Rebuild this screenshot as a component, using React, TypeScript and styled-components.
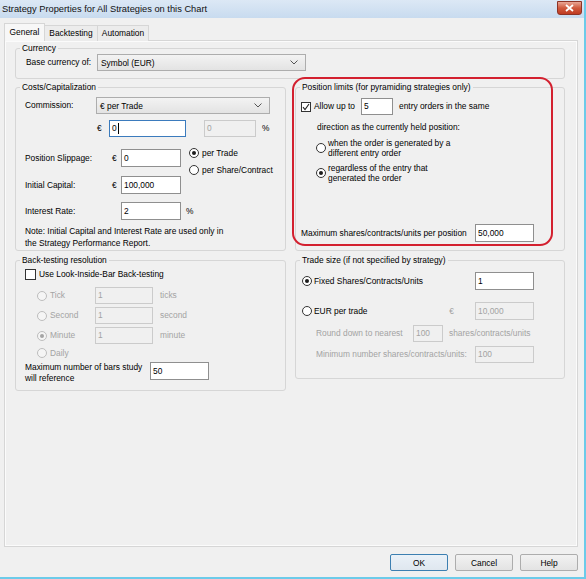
import React from "react";
import styled, { createGlobalStyle } from "styled-components";

const GlobalStyle = createGlobalStyle`
  html, body {
    margin: 0;
    padding: 0;
    background: #f0f0f0;
  }
  body {
    font-family: "Liberation Sans", Arial, sans-serif;
    font-size: 8.4px;
    color: #000;
  }
  * {
    box-sizing: border-box;
  }
`;

const Window = styled.div`
  width: 586px;
  height: 579px;
  display: flex;
  flex-direction: column;
  background: #f0f0f0;
  border-right: 2px solid #6ccbe9;
  border-bottom: 2px solid #6ccbe9;
  overflow: hidden;
`;

const TitleBar = styled.div`
  display: flex;
  justify-content: space-between;
  height: 18px;
  padding-left: 2px;
  background: linear-gradient(#dce8f5, #c8dbef);
`;

const Title = styled.span`
  font-size: 9.3px;
  line-height: 18px;
  color: #111;
`;

const CloseButton = styled.div`
  display: flex;
  align-items: center;
  justify-content: center;
  width: 25px;
  height: 14px;
  margin: 1px 2px 0 0;
  border: 1px solid #8d3326;
  border-radius: 0 0 3px 3px;
  background: linear-gradient(#e9a796, #d05a3e 50%, #bf3b22);
`;

const TabStrip = styled.div`
  display: flex;
  align-items: flex-end;
  height: 18px;
  margin-top: 5px;
  padding-left: 4px;
`;

const Tab = styled.div<{ $active?: boolean; $w: number }>`
  position: relative;
  z-index: ${(p) => (p.$active ? 1 : 0)};
  width: ${(p) => p.$w}px;
  height: ${(p) => (p.$active ? 18 : 16)}px;
  line-height: ${(p) => (p.$active ? 17 : 15)}px;
  text-align: center;
  border: 1px solid #d6d6d6;
  border-bottom: none;
  border-left: ${(p) => (p.$active ? "1px solid #d6d6d6" : "none")};
  background: ${(p) => (p.$active ? "#f7f7f7" : "#ececec")};
`;

const Panel = styled.div`
  width: 574px;
  height: 507px;
  margin: -1px 0 0 4px;
  padding: 2px 0 0 10px;
  border: 1px solid #d6d6d6;
  background: #f0f0f0;
  box-shadow: inset 1px 1px 0 #fbfbfb, inset -1px -1px 0 #fbfbfb;
`;

const Group = styled.fieldset<{ $w?: number; $h: number }>`
  display: block;
  width: ${(p) => (p.$w ? `${p.$w}px` : "auto")};
  height: ${(p) => p.$h}px;
  min-width: 0;
  margin: 0;
  padding: 0;
  border: 1px solid #d6d6d6;
  border-radius: 3px;
`;

const Legend = styled.legend`
  margin-left: 4px;
  padding: 0 2px;
  line-height: 10px;
`;

const GroupBody = styled.div<{ $pl: number }>`
  padding-left: ${(p) => p.$pl}px;
`;

const Columns = styled.div`
  display: grid;
  grid-template-columns: 271px 270px;
  column-gap: 9px;
  align-items: start;
  margin-top: 3px;
`;

const Column = styled.div`
  display: flex;
  flex-direction: column;
  gap: 4px;
`;

const Highlight = styled.div`
  position: relative;
`;

const RedOutline = styled.div`
  position: absolute;
  left: -3px;
  top: -5px;
  width: 261px;
  height: 169px;
  border: 2px solid #d3202f;
  border-radius: 13px;
  pointer-events: none;
`;

const Row = styled.div<{ $mt?: number; $h?: number; $ml?: number; $pr?: number; $top?: boolean }>`
  display: flex;
  align-items: ${(p) => (p.$top ? "flex-start" : "center")};
  height: ${(p) => (p.$h ? `${p.$h}px` : "auto")};
  margin-top: ${(p) => p.$mt ?? 0}px;
  margin-left: ${(p) => p.$ml ?? 0}px;
  padding-right: ${(p) => p.$pr ?? 0}px;
`;

const Label = styled.span<{ $w?: number; $ml?: number; $mt?: number; $off?: boolean; $auto?: boolean }>`
  flex-shrink: 0;
  width: ${(p) => (p.$w ? `${p.$w}px` : "auto")};
  margin-left: ${(p) => (p.$auto ? "auto" : `${p.$ml ?? 0}px`)};
  margin-top: ${(p) => p.$mt ?? 0}px;
  line-height: 11px;
  white-space: nowrap;
  color: ${(p) => (p.$off ? "#a3a3a3" : "#000")};
`;

const Lines = styled.span<{ $ml?: number; $lh: number }>`
  margin-left: ${(p) => p.$ml ?? 0}px;
  line-height: ${(p) => p.$lh}px;
  white-space: nowrap;
`;

const Note = styled.div`
  margin-top: 5px;
  line-height: 12px;
  white-space: nowrap;
`;

const Caption = styled.div<{ $mt: number; $ml: number }>`
  margin-top: ${(p) => p.$mt}px;
  margin-left: ${(p) => p.$ml}px;
  line-height: 10px;
`;

const TextBox = styled.div<{ $w: number; $h?: number; $state?: "focus" | "off"; $ml?: number; $auto?: boolean; $mt?: number }>`
  flex-shrink: 0;
  width: ${(p) => p.$w}px;
  height: ${(p) => p.$h ?? 18}px;
  margin-left: ${(p) => (p.$auto ? "auto" : `${p.$ml ?? 0}px`)};
  margin-top: ${(p) => p.$mt ?? 0}px;
  padding-left: 2px;
  line-height: ${(p) => (p.$h ?? 18) - 2}px;
  border: 1px solid
    ${(p) => (p.$state === "focus" ? "#3b7bbd" : p.$state === "off" ? "#cbcbcb" : "#8f8f8f")};
  background: ${(p) => (p.$state === "off" ? "#f0f0f0" : "#fff")};
  color: ${(p) => (p.$state === "off" ? "#a3a3a3" : "#000")};
  white-space: nowrap;
`;

const Caret = styled.span`
  display: inline-block;
  width: 1px;
  height: 11px;
  margin-left: 1px;
  vertical-align: middle;
  background: #000;
`;

const SelectBox = styled.div<{ $w: number; $h: number }>`
  display: flex;
  align-items: center;
  justify-content: space-between;
  flex-shrink: 0;
  width: ${(p) => p.$w}px;
  height: ${(p) => p.$h}px;
  padding: 0 7px 0 3px;
  border: 1px solid #adadad;
  background: linear-gradient(#f3f3f3, #e3e3e3);
`;

const RadioMark = styled.span<{ $checked?: boolean; $off?: boolean }>`
  position: relative;
  flex-shrink: 0;
  width: 10px;
  height: 10px;
  border-radius: 50%;
  border: 1px solid ${(p) => (p.$off ? "#bdbdbd" : "#333")};
  background: ${(p) => (p.$off ? "#f5f5f5" : "#fff")};

  &::after {
    content: "";
    display: ${(p) => (p.$checked ? "block" : "none")};
    position: absolute;
    inset: 2px;
    border-radius: 50%;
    background: ${(p) => (p.$off ? "#a5a5a5" : "#1c1c1c")};
  }
`;

const CheckMark = styled.span<{ $size: number }>`
  display: flex;
  align-items: center;
  justify-content: center;
  flex-shrink: 0;
  width: ${(p) => p.$size}px;
  height: ${(p) => p.$size}px;
  margin-right: 3px;
  border: 1px solid #333;
  background: #fff;
`;

const Option = styled.div<{ $mt?: number; $ml?: number; $gap: number; $h?: number }>`
  display: flex;
  align-items: center;
  gap: ${(p) => p.$gap}px;
  height: ${(p) => (p.$h ? `${p.$h}px` : "auto")};
  margin-top: ${(p) => p.$mt ?? 0}px;
  margin-left: ${(p) => p.$ml ?? 0}px;
`;

const RadioStack = styled.div`
  display: flex;
  flex-direction: column;
  gap: 5px;
  margin-left: 8px;
`;

const Footer = styled.div`
  display: flex;
  justify-content: flex-end;
  gap: 7px;
  margin-top: 7px;
  padding-right: 6px;
`;

const Button = styled.button<{ $default?: boolean }>`
  width: 58px;
  height: 17px;
  padding: 0;
  font: inherit;
  color: #000;
  border: 1px solid ${(p) => (p.$default ? "#3c7fb1" : "#adadad")};
  border-radius: 2px;
  background: ${(p) =>
    p.$default ? "linear-gradient(#eaf1f8, #dfe7ef)" : "linear-gradient(#f2f2f2, #e3e3e3)"};
`;

function Dropdown({ width, height, value }: { width: number; height: number; value: string }) {
  return (
    <SelectBox $w={width} $h={height}>
      <span>{value}</span>
      <svg width="8" height="5" viewBox="0 0 8 5">
        <path d="M0.5 0.5 L4 4 L7.5 0.5" fill="none" stroke="#555" strokeWidth="1" />
      </svg>
    </SelectBox>
  );
}

function Check({ size }: { size: number }) {
  return <CheckMark $size={size} />;
}

function CheckedBox({ size }: { size: number }) {
  return (
    <CheckMark $size={size}>
      <svg width="8" height="8" viewBox="0 0 8 8">
        <path d="M1 4.2 L3 6.5 L7 1" fill="none" stroke="#222" strokeWidth="1.1" />
      </svg>
    </CheckMark>
  );
}

function App() {
  return (
    <Window>
      <GlobalStyle />
      <TitleBar>
        <Title>Strategy Properties for All Strategies on this Chart</Title>
        <CloseButton>
          <svg width="9" height="8" viewBox="0 0 9 8">
            <path d="M1 1 L8 7 M8 1 L1 7" stroke="#fff" strokeWidth="1.8" />
          </svg>
        </CloseButton>
      </TitleBar>

      <TabStrip>
        <Tab $active $w={41}>General</Tab>
        <Tab $w={53}>Backtesting</Tab>
        <Tab $w={51}>Automation</Tab>
      </TabStrip>

      <Panel>
        <Group $w={550} $h={36}>
          <Legend>Currency</Legend>
          <GroupBody $pl={10}>
            <Row $mt={1} $h={17}>
              <Label $w={71}>Base currency of:</Label>
              <Dropdown width={209} height={17} value="Symbol (EUR)" />
            </Row>
          </GroupBody>
        </Group>

        <Columns>
          <Column>
            <Group $h={169}>
              <Legend>Costs/Capitalization</Legend>
              <GroupBody $pl={9}>
                <Row $mt={5} $h={17}>
                  <Label $w={71}>Commission:</Label>
                  <Dropdown width={174} height={17} value="€ per Trade" />
                </Row>
                <Row $mt={6} $h={17} $ml={72}>
                  <Label $w={12}>€</Label>
                  <TextBox $w={77} $h={17} $state="focus">
                    0<Caret />
                  </TextBox>
                  <TextBox $w={52} $h={17} $state="off" $ml={18}>
                    0
                  </TextBox>
                  <Label $ml={6}>%</Label>
                </Row>
                <Row $mt={10} $h={29} $top>
                  <Label $w={87} $mt={6}>Position Slippage:</Label>
                  <Label $w={9} $mt={6}>€</Label>
                  <TextBox $w={60} $mt={2}>0</TextBox>
                  <RadioStack>
                    <Option $gap={3} $h={12}>
                      <RadioMark $checked />
                      <Label>per Trade</Label>
                    </Option>
                    <Option $gap={3} $h={12}>
                      <RadioMark />
                      <Label>per Share/Contract</Label>
                    </Option>
                  </RadioStack>
                </Row>
                <Row $h={18}>
                  <Label $w={87}>Initial Capital:</Label>
                  <Label $w={9}>€</Label>
                  <TextBox $w={60}>100,000</TextBox>
                </Row>
                <Row $mt={8} $h={18}>
                  <Label $w={96}>Interest Rate:</Label>
                  <TextBox $w={60}>2</TextBox>
                  <Label $ml={5}>%</Label>
                </Row>
                <Note>
                  Note: Initial Capital and Interest Rate are used only in
                  <br />
                  the Strategy Performance Report.
                </Note>
              </GroupBody>
            </Group>

            <Group $h={136}>
              <Legend>Back-testing resolution</Legend>
              <GroupBody $pl={9}>
                <Row $mt={4} $h={11}>
                  <Check size={11} />
                  <Label>Use Look-Inside-Bar Back-testing</Label>
                </Row>
                <Row $mt={7} $h={17} $ml={12}>
                  <RadioMark $off />
                  <Label $w={45} $ml={3} $off>Tick</Label>
                  <TextBox $w={58} $h={17} $state="off">1</TextBox>
                  <Label $ml={7} $off>ticks</Label>
                </Row>
                <Row $mt={3} $h={17} $ml={12}>
                  <RadioMark $off />
                  <Label $w={45} $ml={3} $off>Second</Label>
                  <TextBox $w={58} $h={17} $state="off">1</TextBox>
                  <Label $ml={7} $off>second</Label>
                </Row>
                <Row $mt={3} $h={17} $ml={12}>
                  <RadioMark $off $checked />
                  <Label $w={45} $ml={3} $off>Minute</Label>
                  <TextBox $w={58} $h={17} $state="off">1</TextBox>
                  <Label $ml={7} $off>minute</Label>
                </Row>
                <Row $mt={3} $h={12} $ml={12}>
                  <RadioMark $off />
                  <Label $ml={3} $off>Daily</Label>
                </Row>
                <Row $mt={3} $top>
                  <Label $w={125}>
                    Maximum number of bars study
                    <br />
                    will reference
                  </Label>
                  <TextBox $w={59}>50</TextBox>
                </Row>
              </GroupBody>
            </Group>
          </Column>

          <Column>
            <Highlight>
              <Group $h={169}>
                <Legend>Position limits (for pyramiding strategies only)</Legend>
                <GroupBody $pl={5}>
                  <Row $mt={6} $h={17}>
                    <CheckedBox size={10} />
                    <Label $w={47}>Allow up to</Label>
                    <TextBox $w={32} $h={17}>5</TextBox>
                    <Label $ml={6}>entry orders in the same</Label>
                  </Row>
                  <Caption $mt={7} $ml={16}>
                    direction as the currently held position:
                  </Caption>
                  <Option $mt={6} $ml={15} $gap={2}>
                    <RadioMark />
                    <Lines $lh={10}>
                      when the order is generated by a
                      <br />
                      different entry order
                    </Lines>
                  </Option>
                  <Option $mt={5} $ml={15} $gap={2}>
                    <RadioMark $checked />
                    <Lines $lh={10}>
                      regardless of the entry that
                      <br />
                      generated the order
                    </Lines>
                  </Option>
                  <Row $mt={41} $h={18} $pr={30}>
                    <Label>Maximum shares/contracts/units per position</Label>
                    <TextBox $w={59} $auto>50,000</TextBox>
                  </Row>
                </GroupBody>
              </Group>
              <RedOutline />
            </Highlight>

            <Group $h={124}>
              <Legend>Trade size (if not specified by strategy)</Legend>
              <GroupBody $pl={6}>
                <Row $mt={7} $h={18} $pr={30}>
                  <RadioMark $checked />
                  <Label $ml={2}>Fixed Shares/Contracts/Units</Label>
                  <TextBox $w={59} $auto>1</TextBox>
                </Row>
                <Row $mt={12} $h={18} $pr={30}>
                  <RadioMark />
                  <Label $ml={2}>EUR per trade</Label>
                  <Label $auto $off>€</Label>
                  <TextBox $w={59} $ml={21} $state="off">10,000</TextBox>
                </Row>
                <Row $mt={5} $h={17} $ml={14}>
                  <Label $w={97} $off>Round down to nearest</Label>
                  <TextBox $w={30} $h={17} $state="off">100</TextBox>
                  <Label $ml={6} $off>shares/contracts/units</Label>
                </Row>
                <Row $mt={4} $h={17} $ml={14} $pr={30}>
                  <Label $off>Minimum number shares/contracts/units:</Label>
                  <TextBox $w={59} $h={17} $auto $state="off">100</TextBox>
                </Row>
              </GroupBody>
            </Group>
          </Column>
        </Columns>
      </Panel>

      <Footer>
        <Button $default>OK</Button>
        <Button>Cancel</Button>
        <Button>Help</Button>
      </Footer>
    </Window>
  );
}

export default App;
